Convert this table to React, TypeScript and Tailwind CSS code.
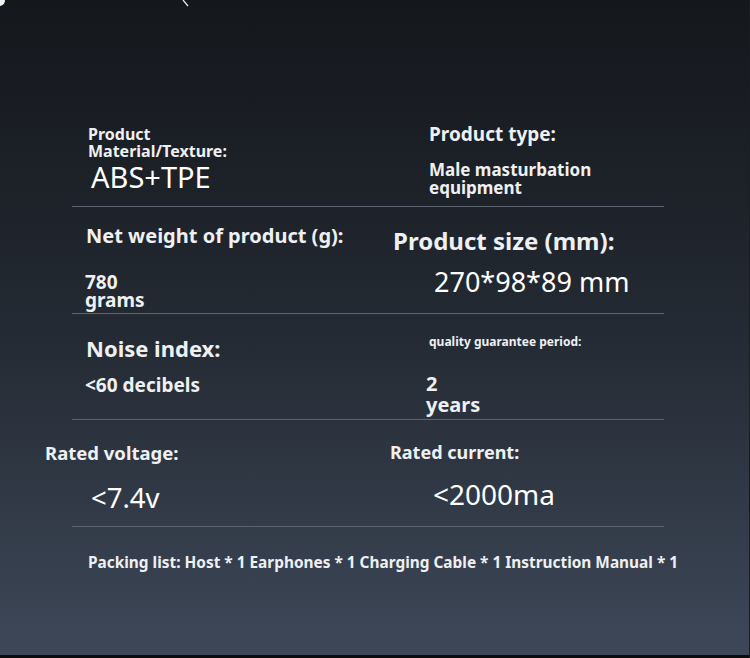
import React from 'react';

const font = { fontFamily: '"Noto Sans", "Open Sans", sans-serif' };

const Divider = () => <div className="h-px bg-[#5e656f]" />;

export default function App() {
  return (
    <div
      className="relative w-[750px] h-[658px] overflow-hidden bg-gradient-to-b from-[#14171c] via-[#242a33] to-[#3e4859] text-[#eef0f2]"
      style={font}
    >
      {/* scraps of the cropped image above */}
      <svg className="absolute left-0 top-0" width="200" height="10" viewBox="0 0 200 10">
        <path d="M0 0 H5 Q5 5 0 6 Z" fill="#f2f2f2" />
        <path d="M183 0 L188 6" stroke="#e8e8e8" strokeWidth="1.3" />
      </svg>

      <div className="flex flex-col pt-[100px] ml-[72px] w-[592px]">
        {/* material / type */}
        <div className="grid grid-cols-[318px_1fr] h-[106px]">
          <div className="pl-[16px] pt-[26px]">
            <p className="text-[16px] font-bold leading-[17px]">
              Product
              <br />
              Material/Texture:
            </p>
            <p className="pl-[3px] mt-[1px] text-[29px] leading-[32px] text-white">ABS+TPE</p>
          </div>
          <div className="pl-[39px] pt-[23px]">
            <p className="text-[19px] font-bold leading-[22px]">Product type:</p>
            <p className="mt-[16px] text-[17px] font-bold leading-[18px]">
              Male masturbation
              <br />
              equipment
            </p>
          </div>
        </div>
        <Divider />

        {/* weight / size */}
        <div className="grid grid-cols-[318px_1fr] h-[106px]">
          <div className="pl-[14px] pt-[17px]">
            <p className="text-[20px] font-bold leading-[24px]">Net weight of product (g):</p>
            <p className="-ml-[1px] mt-[25px] text-[19px] font-bold leading-[18px]">
              780
              <br />
              grams
            </p>
          </div>
          <div className="pl-[3px] pt-[21px]">
            <p className="text-[24px] font-bold leading-[26px]">Product size (mm):</p>
            <p className="pl-[41px] mt-[11px] text-[27px] leading-[34px] text-white">270*98*89 mm</p>
          </div>
        </div>
        <Divider />

        {/* noise / guarantee */}
        <div className="grid grid-cols-[318px_1fr] h-[105px]">
          <div className="pl-[14px] pt-[21px]">
            <p className="text-[22px] font-bold leading-[26px]">Noise index:</p>
            <p className="-ml-[1px] mt-[13px] text-[19px] font-bold leading-[22px]">&lt;60 decibels</p>
          </div>
          <div className="pl-[39px] pt-[21px]">
            <p className="text-[12px] font-bold leading-[14px]">quality guarantee period:</p>
            <p className="-ml-[3px] mt-[24px] text-[20px] font-bold leading-[21px]">
              2
              <br />
              years
            </p>
          </div>
        </div>
        <Divider />

        {/* voltage / current */}
        <div className="grid grid-cols-[318px_1fr] h-[106px]">
          <div className="-ml-[27px] pt-[21px]">
            <p className="text-[18.5px] font-bold leading-[24px]">Rated voltage:</p>
            <p className="pl-[46px] mt-[17px] text-[27.5px] leading-[32px] text-white">&lt;7.4v</p>
          </div>
          <div className="pt-[20px]">
            <p className="text-[18px] font-bold leading-[24px]">Rated current:</p>
            <p className="pl-[43px] mt-[14px] text-[28px] leading-[32px] text-white">&lt;2000ma</p>
          </div>
        </div>
        <Divider />

        <p className="pl-[16px] pt-[26px] text-[15.4px] font-bold leading-[20px] whitespace-nowrap">
          Packing list: Host * 1 Earphones * 1 Charging Cable * 1 Instruction Manual * 1
        </p>
      </div>

      <div className="absolute left-0 right-0 bottom-0 h-[3px] bg-[#0b0c0e]" />
      <div className="absolute top-0 bottom-0 right-0 w-px bg-[#1a1d22]" />
    </div>
  );
}
